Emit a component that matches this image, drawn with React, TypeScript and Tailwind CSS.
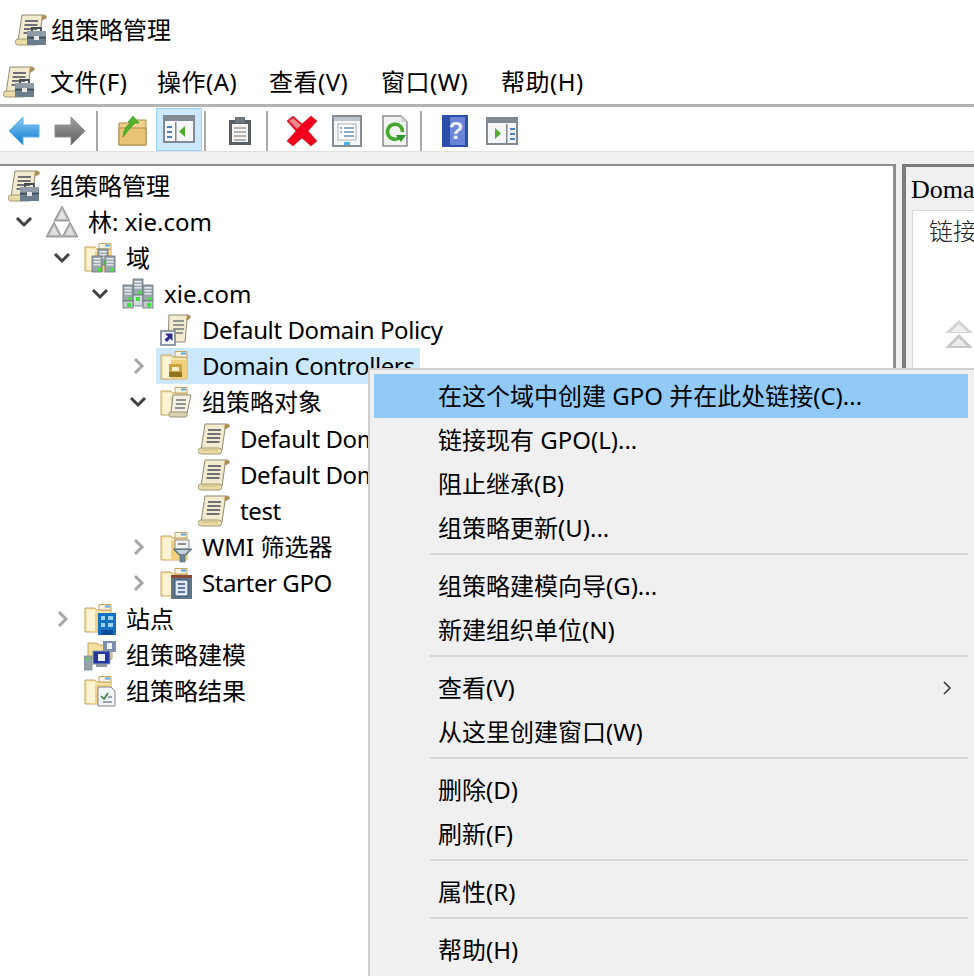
import React from 'react';

type IconProps = { className?: string };

// small shared bits for the snap-in icons
const Svg = ({ className = 'w-8 h-8', children }: { className?: string; children: React.ReactNode }) => (
  <svg viewBox="0 0 32 32" className={`${className} shrink-0`}>
    {children}
  </svg>
);

const ScrollShape = () => (
  <>
    <path d="M7 1H28Q32 1 31 4L27 6L24 27H3Z" fill="#f2ebcf" stroke="#8f8a72" strokeWidth="1" />
    <path d="M27 1Q32 1 31 4L26 6Z" fill="#b08f4e" />
    <path d="M10 7H23M9.500 11H22.500M9 15H22M8.500 19H21.500" stroke="#6f7177" strokeWidth="1.800" />
    <rect x="0.500" y="25" width="23" height="6" rx="2.500" fill="#e9dca6" stroke="#a29a78" />
  </>
);

const GpmIcon = ({ className }: IconProps) => (
  <Svg className={className}>
    <ScrollShape />
    <path d="M12 17H31V31H12Z" fill="#6b7d8a" />
    <path d="M12 17H31V22H12Z" fill="#8d9ca6" />
    <path d="M12 23H31V24.500H12Z" fill="#3f4d58" />
    <path d="M17 17V14H26V17" fill="none" stroke="#3f4b55" strokeWidth="1.800" />
    <rect x="19" y="22" width="5" height="4" fill="#e6e6e6" />
  </Svg>
);

const PolicyScroll = ({ className }: IconProps) => (
  <Svg className={className}>
    <ScrollShape />
    <path d="M4 27H20" stroke="#c9ba80" strokeWidth="1" />
  </Svg>
);

const LinkScroll = ({ className }: IconProps) => (
  <Svg className={className}>
    <path d="M9 1H28Q31 1 30 4L27 6L25 28H8Z" fill="#f2ebcf" stroke="#8f8a72" />
    <path d="M27 1Q31 1 30 4L26 6Z" fill="#b08f4e" />
    <path d="M13 7H24M13 11H24M13 15H24M13 19H23" stroke="#77797f" strokeWidth="1.600" />
    <rect x="0" y="16" width="16" height="16" fill="#8e9aa5" />
    <rect x="2" y="18" width="12" height="12" fill="#f5f6fa" />
    <path d="M5 19.500H12.500V27L10 24.500L7 28L4.500 25.500L8 22.500L5 19.500Z" fill="#2c2c8e" />
  </Svg>
);

const FolderBase = () => (
  <>
    <path d="M1 5H11L13 7H27V29H1Z" fill="#f6e5ad" stroke="#c5a565" />
    <path d="M5 10H27V29H5Z" fill="#f1d17f" />
    <path d="M3 7H11V28H3Z" fill="#fbf3d3" />
    <path d="M15 1.500H27V7H15Z" fill="#f6f2e2" stroke="#c5a565" />
    <rect x="21" y="2.500" width="5" height="2" fill="#55a8e8" />
  </>
);

const ServerBox = ({ x, y }: { x: number; y: number }) => (
  <g>
    <rect x={x} y={y} width="10" height="16" fill="#9aa7ad" stroke="#667078" strokeWidth="0.800" />
    <rect x={x + 1.500} y={y + 2} width="7" height="1.600" fill="#e5e9eb" />
    <rect x={x + 1.500} y={y + 5} width="7" height="1.600" fill="#e5e9eb" />
    <rect x={x + 1.500} y={y + 8} width="7" height="1.600" fill="#dbe0e2" />
    <rect x={x + 5.500} y={y + 12} width="3.500" height="3.500" fill="#3ee23a" />
  </g>
);

const DomainsIcon = ({ className }: IconProps) => (
  <Svg className={className}>
    <FolderBase />
    <ServerBox x={14} y={7} />
    <ServerBox x={8} y={14} />
    <ServerBox x={21} y={14} />
  </Svg>
);

const DomainIcon = ({ className }: IconProps) => (
  <Svg className={className}>
    <ServerBox x={11} y={1} />
    <rect x="11" y="17" width="10" height="11" fill="#d3dadd" stroke="#667078" strokeWidth="0.800" />
    <rect x="14" y="19" width="4" height="4" fill="#3ee23a" />
    <ServerBox x={1} y={7} />
    <ServerBox x={21} y={7} />
    <rect x="1" y="23" width="10" height="7" fill="#c3cbcf" stroke="#667078" strokeWidth="0.800" />
    <rect x="21" y="23" width="10" height="7" fill="#c3cbcf" stroke="#667078" strokeWidth="0.800" />
    <rect x="5" y="25" width="4" height="4" fill="#3ee23a" />
    <rect x="25" y="25" width="4" height="4" fill="#3ee23a" />
  </Svg>
);

const ForestIcon = ({ className }: IconProps) => (
  <Svg className={className}>
    <path d="M16 0L24 15H8Z" fill="#b4b4b4" stroke="#7c7c7c" strokeWidth="0.700" />
    <path d="M16 4L20.500 13H11.500Z" fill="#e6e6e6" />
    <path d="M8 16L16 31H0Z" fill="#b4b4b4" stroke="#7c7c7c" strokeWidth="0.700" />
    <path d="M8 20L12.500 29H3.500Z" fill="#e2e2e2" />
    <path d="M24 16L32 31H16Z" fill="#b4b4b4" stroke="#7c7c7c" strokeWidth="0.700" />
    <path d="M24 20L28.500 29H19.500Z" fill="#e2e2e2" />
  </Svg>
);

const OuIcon = ({ className }: IconProps) => (
  <Svg className={className}>
    <FolderBase />
    <rect x="9" y="14" width="13" height="13" fill="#cba63f" />
    <rect x="12" y="17" width="7" height="4" fill="#f7eec8" />
    <rect x="9" y="22" width="13" height="5" fill="#8f7420" />
  </Svg>
);

const GpoFolderIcon = ({ className }: IconProps) => (
  <Svg className={className}>
    <FolderBase />
    <path d="M13 9H31L27 27H11Z" fill="#f4f1e2" stroke="#8f8a72" />
    <path d="M16 14H26M16 18H26M15 22H25" stroke="#70747a" strokeWidth="1.600" />
    <rect x="9" y="26" width="18" height="5" rx="1.500" fill="#d9d2ae" stroke="#98937a" />
  </Svg>
);

const WmiIcon = ({ className }: IconProps) => (
  <Svg className={className}>
    <FolderBase />
    <rect x="15" y="9" width="14" height="9" fill="#f2f2f2" stroke="#8d8d8d" />
    <path d="M18 13H26" stroke="#777777" strokeWidth="1.600" />
    <path d="M13 18H32L25 25V31H20V25Z" fill="#6d8696" stroke="#4d5d68" strokeWidth="0.600" />
    <path d="M16 19H29L25 23H20Z" fill="#c6d2d9" />
  </Svg>
);

const StarterIcon = ({ className }: IconProps) => (
  <Svg className={className}>
    <FolderBase />
    <rect x="11" y="8" width="21" height="3" fill="#8b4a38" />
    <path d="M11 11H32V32H11Z" fill="#5f7684" />
    <path d="M15 13H28V29H15Z" fill="#dfe7f3" stroke="#35507c" />
    <path d="M18 17H25M18 21H25M18 25H25" stroke="#35507c" strokeWidth="1.600" />
  </Svg>
);

const SitesIcon = ({ className }: IconProps) => (
  <Svg className={className}>
    <FolderBase />
    <rect x="14" y="10" width="18" height="22" fill="#1273c4" />
    <path d="M17 13H21V17H17ZM24 13H29V17H24ZM17 20H21V24H17ZM24 20H29V24H24Z" fill="#9bd4f5" />
    <rect x="17" y="27" width="12" height="5" fill="#0d4c99" />
  </Svg>
);

const ModelingIcon = ({ className }: IconProps) => (
  <Svg className={className}>
    <path d="M4 4H13L15 6H28V20H4Z" fill="#f5df9b" stroke="#c5a565" />
    <rect x="19" y="2" width="13" height="11" fill="#7d8fae" />
    <rect x="23" y="4" width="5" height="6" fill="#f0f3f8" />
    <rect x="9" y="12" width="17" height="13" fill="#22379b" stroke="#96a0b5" />
    <rect x="14" y="15" width="7" height="7" fill="#eef1fa" />
    <rect x="12" y="25" width="11" height="3" fill="#8e949b" />
    <rect x="0" y="17" width="8" height="14" fill="#96a3a8" stroke="#6c757a" strokeWidth="0.600" />
    <rect x="1.500" y="19.500" width="4" height="1.500" fill="#3ee23a" />
  </Svg>
);

const ResultsIcon = ({ className }: IconProps) => (
  <Svg className={className}>
    <FolderBase />
    <path d="M14 12H27L31 16V31H14Z" fill="#f3f4f6" stroke="#7f868c" />
    <path d="M17 21L20 24L24 18" fill="none" stroke="#3c7f48" strokeWidth="1.600" />
    <path d="M19 27H28M24 22H28" stroke="#7f8f9f" strokeWidth="1.500" />
  </Svg>
);

const BackArrow = () => (
  <svg viewBox="0 0 32 30" className="w-8 h-[30px] shrink-0">
    <defs>
      <linearGradient id="bk" x1="0" y1="0" x2="0" y2="1">
        <stop offset="0" stopColor="#8fd0f7" />
        <stop offset="1" stopColor="#0a76cf" />
      </linearGradient>
    </defs>
    <path d="M15 1L1 15L15 29V21H31V9H15Z" fill="url(#bk)" stroke="#5cb2ee" />
  </svg>
);

const ForwardArrow = () => (
  <svg viewBox="0 0 32 30" className="w-8 h-[30px] shrink-0">
    <defs>
      <linearGradient id="fw" x1="0" y1="0" x2="0" y2="1">
        <stop offset="0" stopColor="#a4a4a4" />
        <stop offset="1" stopColor="#5d5d5d" />
      </linearGradient>
    </defs>
    <path d="M17 1L31 15L17 29V21H1V9H17Z" fill="url(#fw)" stroke="#909090" />
  </svg>
);

const UpFolder = () => (
  <svg viewBox="0 0 30 32" className="w-[30px] h-8 shrink-0">
    <path d="M1 8H12L14 5H28V30H1Z" fill="#eed189" stroke="#a88a48" />
    <path d="M1 13H28V30H1Z" fill="#e8c574" stroke="#a88a48" />
    <path d="M5 22Q6 11 13 8L10 7L15 1L21 8H17Q11 14 5 22Z" fill="#52b52a" stroke="#2f8a16" strokeWidth="0.600" />
  </svg>
);

const PanelLeft = () => (
  <svg viewBox="0 0 32 28" className="w-8 h-7 shrink-0">
    <rect x="1" y="1" width="30" height="26" fill="#f4f6f7" stroke="#818a93" strokeWidth="2" />
    <rect x="1" y="1" width="30" height="5" fill="#818a93" />
    <rect x="12" y="7" width="1.500" height="19" fill="#818a93" />
    <path d="M4 11H9V13H4ZM4 16H9V18H4ZM4 21H9V23H4Z" fill="#4f81bd" />
    <path d="M22 11V22L16 16.500Z" fill="#4fae2d" />
  </svg>
);

const PanelRight = () => (
  <svg viewBox="0 0 32 28" className="w-8 h-7 shrink-0">
    <rect x="1" y="1" width="30" height="26" fill="#f4f6f7" stroke="#818a93" strokeWidth="2" />
    <rect x="1" y="1" width="30" height="5" fill="#818a93" />
    <rect x="20" y="7" width="1.500" height="19" fill="#818a93" />
    <path d="M24 11H29V13H24ZM24 16H29V18H24ZM24 21H29V23H24Z" fill="#4f81bd" />
    <path d="M9 11V22L15 16.500Z" fill="#4fae2d" />
  </svg>
);

const Clipboard = () => (
  <svg viewBox="0 0 24 30" className="w-6 h-[30px] shrink-0">
    <rect x="1" y="4" width="22" height="25" fill="#5a5f64" />
    <rect x="4" y="8" width="16" height="18" fill="#f3f3f3" />
    <rect x="7" y="1" width="10" height="6" fill="#70757a" />
    <path d="M6 12H18M6 16H18M6 20H18M6 24H18" stroke="#a0a0a0" strokeWidth="1.500" />
  </svg>
);

const DeleteX = () => (
  <svg viewBox="0 0 32 32" className="w-8 h-8 shrink-0">
    <path d="M1 6L7 1L16 9L25 1L31 6L22 16L31 26L25 31L16 23L7 31L1 26L10 16Z" fill="#f2001c" stroke="#c43a3a" strokeWidth="0.800" />
    <path d="M3 6L7 3L15 10L11 14Z" fill="#f08a8a" />
  </svg>
);

const Properties = () => (
  <svg viewBox="0 0 30 32" className="w-[30px] h-8 shrink-0">
    <rect x="1" y="1" width="28" height="30" fill="#f5f6f7" stroke="#858c93" strokeWidth="2" />
    <rect x="2" y="2" width="26" height="4" fill="#bfc4c9" />
    <rect x="6" y="9" width="18" height="16" fill="#fff" stroke="#a9b0b6" />
    <path d="M8 13H10M12 13H22M8 17H10M12 17H22M12 21H22" stroke="#6d8fb0" strokeWidth="1.500" />
    <rect x="12" y="27" width="6" height="3" fill="#41b3ee" />
  </svg>
);

const RefreshDoc = () => (
  <svg viewBox="0 0 26 32" className="w-[26px] h-8 shrink-0">
    <path d="M1 1H19L25 7V31H1Z" fill="#f2f3f3" stroke="#8c8c8c" strokeWidth="1.500" />
    <path d="M19 1V7H25Z" fill="#d4d4d4" />
    <path d="M17 23A7.500 7.500 0 1 1 20.500 17" fill="none" stroke="#45a82c" strokeWidth="3.500" />
    <path d="M14 20H24L19 27Z" fill="#2f9a2b" />
  </svg>
);

const HelpBook = () => (
  <svg viewBox="0 0 26 32" className="w-[26px] h-8 shrink-0">
    <rect x="0" y="0" width="26" height="32" fill="#2b4ea8" />
    <rect x="8" y="2" width="15" height="28" fill="#6b84d8" />
    <text x="14" y="24" textAnchor="middle" fontSize="24" fontWeight="700" fill="#f0f0fa" fontFamily="Liberation Sans">?</text>
  </svg>
);

const Chevron = ({ state }: { state: 'open' | 'closed' | 'none' }) => {
  if (state === 'none') return <span className="w-[38px] shrink-0" />;
  if (state === 'open') {
    return (
      <span className="w-[38px] shrink-0 flex pl-[11px]">
        <svg viewBox="0 0 18 12" className="w-[18px] h-3">
          <path d="M2 2L9 9L16 2" fill="none" stroke="#404040" strokeWidth="3" />
        </svg>
      </span>
    );
  }
  return (
    <span className="w-[38px] shrink-0 flex pl-[15px]">
      <svg viewBox="0 0 12 18" className="w-3 h-[18px]">
        <path d="M2 2L9 9L2 16" fill="none" stroke="#a6a6a6" strokeWidth="3" />
      </svg>
    </span>
  );
};

type Node = {
  level: number;
  chevron: 'open' | 'closed' | 'none';
  Icon: React.FC<IconProps>;
  label: string;
  selected?: boolean;
  tight?: boolean;
};

const nodes: Node[] = [
  { level: 0, chevron: 'open', Icon: ForestIcon, label: '林: xie.com' },
  { level: 1, chevron: 'open', Icon: DomainsIcon, label: '域' },
  { level: 2, chevron: 'open', Icon: DomainIcon, label: 'xie.com' },
  { level: 3, chevron: 'none', Icon: LinkScroll, label: 'Default Domain Policy', tight: true },
  { level: 3, chevron: 'closed', Icon: OuIcon, label: 'Domain Controllers', selected: true, tight: true },
  { level: 3, chevron: 'open', Icon: GpoFolderIcon, label: '组策略对象' },
  { level: 4, chevron: 'none', Icon: PolicyScroll, label: 'Default Domain Controllers Policy', tight: true },
  { level: 4, chevron: 'none', Icon: PolicyScroll, label: 'Default Domain Policy', tight: true },
  { level: 4, chevron: 'none', Icon: PolicyScroll, label: 'test', tight: true },
  { level: 3, chevron: 'closed', Icon: WmiIcon, label: 'WMI 筛选器' },
  { level: 3, chevron: 'closed', Icon: StarterIcon, label: 'Starter GPO', tight: true },
  { level: 1, chevron: 'closed', Icon: SitesIcon, label: '站点' },
  { level: 1, chevron: 'none', Icon: ModelingIcon, label: '组策略建模' },
  { level: 1, chevron: 'none', Icon: ResultsIcon, label: '组策略结果' },
];

const menuGroups: { label: string; arrow?: boolean }[][] = [
  [
    { label: '在这个域中创建 GPO 并在此处链接(C)...' },
    { label: '链接现有 GPO(L)...' },
    { label: '阻止继承(B)' },
    { label: '组策略更新(U)...' },
  ],
  [{ label: '组策略建模向导(G)...' }, { label: '新建组织单位(N)' }],
  [{ label: '查看(V)', arrow: true }, { label: '从这里创建窗口(W)' }],
  [{ label: '删除(D)' }, { label: '刷新(F)' }],
  [{ label: '属性(R)' }],
  [{ label: '帮助(H)' }],
];

const menuBar = [
  { label: '文件(F)', width: 'w-[107px]' },
  { label: '操作(A)', width: 'w-[112px]' },
  { label: '查看(V)', width: 'w-[112px]' },
  { label: '窗口(W)', width: 'w-[120px]' },
  { label: '帮助(H)', width: 'w-[90px]' },
];

const ToolSep = () => <span className="block w-0.5 h-10 bg-[#a8a8a8]" />;

export default function App() {
  return (
    <div className="relative w-[974px] h-[976px] overflow-hidden bg-white text-[24px] leading-[36px] text-black font-['Noto_Sans','Noto_Sans_CJK_SC',sans-serif]">
      {/* title bar */}
      <div className="h-[60px] flex items-center pl-[15px] gap-1">
        <GpmIcon className="w-8 h-8" />
        <span>组策略管理</span>
      </div>

      {/* menu bar */}
      <div className="h-[44px] flex items-center pl-[3px]">
        <GpmIcon className="w-8 h-8" />
        <div className="flex ml-[15px] tracking-[0.5px]">
          {menuBar.map((m) => (
            <span key={m.label} className={m.width}>{m.label}</span>
          ))}
        </div>
      </div>
      <div className="h-[3px] bg-[#b4b4b4]" />

      {/* toolbar */}
      <div className="h-[45px] flex items-center pl-2 pt-[3px] border-b border-[#e0e0e0]">
        <BackArrow />
        <span className="ml-[14px]"><ForwardArrow /></span>
        <span className="ml-[10px]"><ToolSep /></span>
        <span className="ml-[20px]"><UpFolder /></span>
        <span className="ml-[8px] -mt-[3px] w-[46px] h-[43px] bg-[#cce8ff] border border-[#99d1ff] flex items-center justify-center">
          <PanelLeft />
        </span>
        <span className="ml-[2px]"><ToolSep /></span>
        <span className="ml-[22px]"><Clipboard /></span>
        <span className="ml-[14px]"><ToolSep /></span>
        <span className="ml-[18px]"><DeleteX /></span>
        <span className="ml-[14px]"><Properties /></span>
        <span className="ml-[20px]"><RefreshDoc /></span>
        <span className="ml-[12px]"><ToolSep /></span>
        <span className="ml-[20px]"><HelpBook /></span>
        <span className="ml-[18px]"><PanelRight /></span>
      </div>

      {/* panes */}
      <div className="h-[824px] bg-[#f0f0f0] pt-[12px] flex gap-[6px]">
        <div className="w-[896px] shrink-0 bg-white border-t-2 border-r-[3px] border-[#8a8d91] pt-[2px]">
          <div className="flex items-center h-9 pl-2 gap-[10px]">
            <GpmIcon className="w-8 h-8" />
            <span>组策略管理</span>
          </div>
          {nodes.map((n, idx) => (
            <div key={idx} className="flex items-center h-[36.080px] pl-1">
              {Array.from({ length: n.level }).map((_, i) => (
                <span key={i} className="w-[38px] shrink-0" />
              ))}
              <Chevron state={n.chevron} />
              <div className={`flex items-center gap-[10px] h-full pl-1 ${n.selected ? 'bg-[#cce8ff] pr-[6px]' : 'pr-[2px]'}`}>
                <n.Icon className="w-8 h-8" />
                <span className={`whitespace-nowrap ${n.tight ? 'tracking-[-0.4px]' : ''}`}>{n.label}</span>
              </div>
            </div>
          ))}
        </div>

        <div className="flex-1 border-t-[3px] border-l-[4px] border-[#7b7b7b] bg-[#f0f0f0] pl-[6px] pt-[3px] min-w-0 overflow-hidden">
          <div className="h-[40px] whitespace-nowrap text-[26px] leading-[40px] -ml-px font-['Liberation_Serif','Noto_Sans_CJK_SC',serif]">
            Domain Controllers
          </div>
          <div className="h-[760px] bg-white border-t border-l border-[#d9d9d9] pl-[16px] pt-[2px]">
            <div className="whitespace-nowrap font-light text-[#222222]">链接的组策略对象</div>
            <div className="mt-[70px] ml-[15px]">
              <svg viewBox="0 0 30 30" className="w-[30px] h-[30px]">
                <path d="M15 1L29 14H1Z" fill="#d4d4d4" />
                <path d="M15 5L23 13H7Z" fill="#f0f0f0" />
                <path d="M15 15L29 29H1Z" fill="#c8c8c8" />
                <path d="M15 19L23 27H7Z" fill="#ececec" />
              </svg>
            </div>
          </div>
        </div>
      </div>

      {/* context menu */}
      <div className="absolute left-[368px] top-[368px] w-[606px] h-[608px] bg-[#f0f0f0] border-t-2 border-l-2 border-[#cfcfcf] pl-1 pr-[6px] pt-1">
        {menuGroups.map((group, gi) => (
          <div key={gi}>
            {gi > 0 && <div className="ml-[56px] mt-[3px] mb-[9px] h-0.5 bg-[#d9d9d9]" />}
            {group.map((item, ii) => (
              <div
                key={item.label}
                className={`h-[44px] flex items-center justify-between pl-[64px] pr-4 ${gi === 0 && ii === 0 ? 'bg-[#91c9f7]' : ''}`}
              >
                <span className="whitespace-nowrap">{item.label}</span>
                {item.arrow && (
                  <svg viewBox="0 0 10 16" className="w-2.5 h-4">
                    <path d="M2 2L8 8L2 14" fill="none" stroke="#333333" strokeWidth="1.500" />
                  </svg>
                )}
              </div>
            ))}
          </div>
        ))}
      </div>
    </div>
  );
}
